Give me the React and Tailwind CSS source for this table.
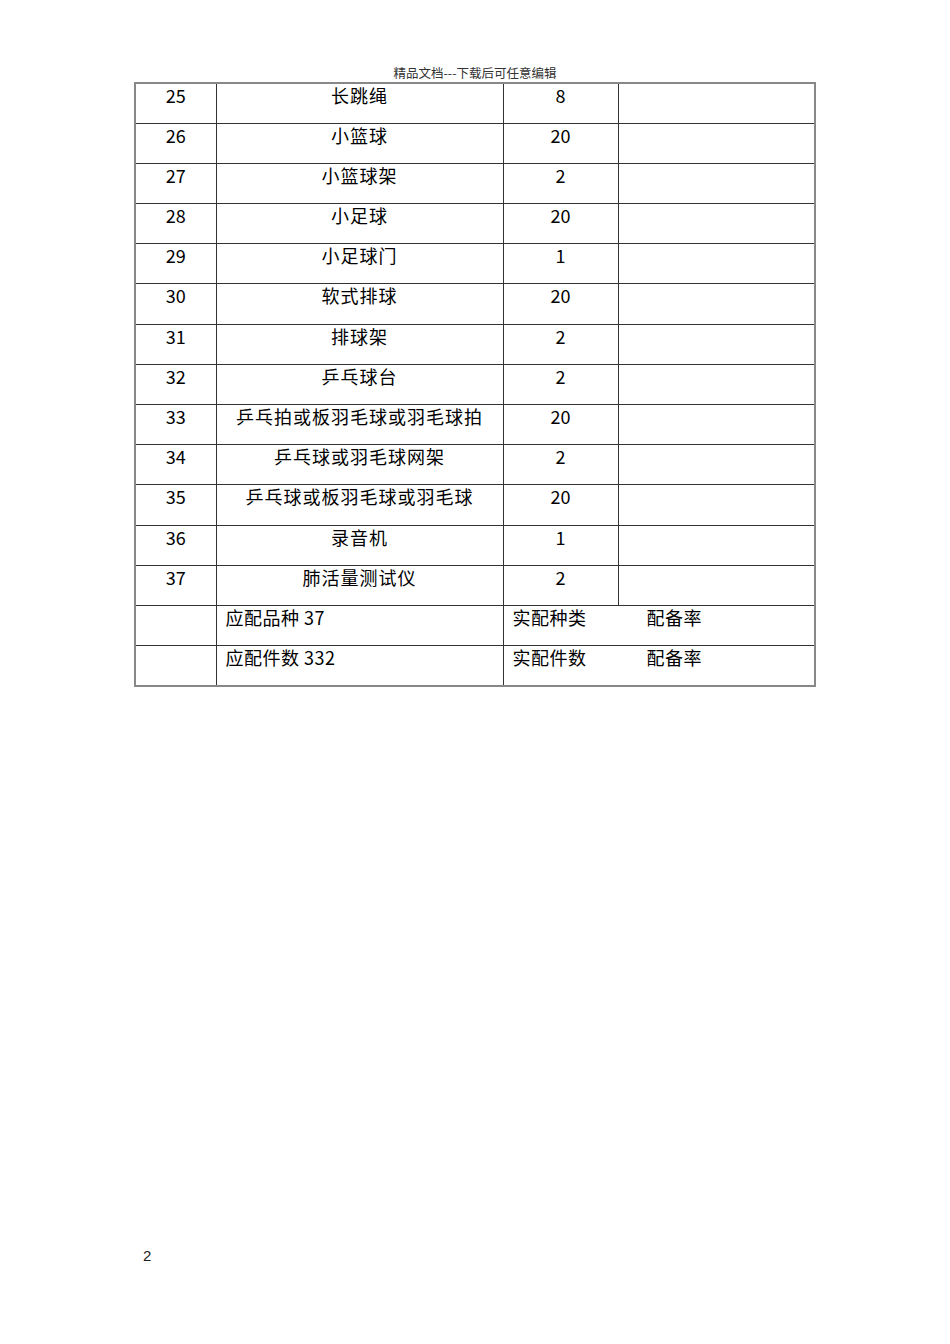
const rows = [
  ['25', '长跳绳', '8'],
  ['26', '小篮球', '20'],
  ['27', '小篮球架', '2'],
  ['28', '小足球', '20'],
  ['29', '小足球门', '1'],
  ['30', '软式排球', '20'],
  ['31', '排球架', '2'],
  ['32', '乒乓球台', '2'],
  ['33', '乒乓拍或板羽毛球或羽毛球拍', '20'],
  ['34', '乒乓球或羽毛球网架', '2'],
  ['35', '乒乓球或板羽毛球或羽毛球', '20'],
  ['36', '录音机', '1'],
  ['37', '肺活量测试仪', '2'],
];

const font = { fontFamily: '"Noto Sans CJK SC", "Noto Sans", sans-serif' };

export default function App() {
  return (
    <div className="w-[950px] h-[1344px] bg-white relative" style={font}>
      <div className="pt-[64px] text-center text-[12.5px] leading-[18px] text-[#333]">
        精品文档---下载后可任意编辑
      </div>
      <div className="ml-[134px] w-[682px]">
        <table className="table-fixed border-collapse w-[680px] text-[18px] leading-[22px] text-black border-2 border-[#888]">
          <colgroup>
            <col className="w-[81px]" />
            <col className="w-[287px]" />
            <col className="w-[115px]" />
            <col className="w-[197px]" />
          </colgroup>
          <tbody>
            {rows.map(([n, name, q]) => (
              <tr key={n} className="h-[40.2px]">
                <td className="border border-[#333] align-top text-center pt-0">{n}</td>
                <td className="border border-[#333] align-top text-center pt-0 tracking-[1px]">{name}</td>
                <td className="border border-[#333] align-top text-center pt-0">{q}</td>
                <td className="border border-[#333]"></td>
              </tr>
            ))}
            <tr className="h-[40.2px]">
              <td className="border border-[#333]"></td>
              <td className="border border-[#333] align-top pt-0 pl-[9px] tracking-[0.5px]">应配品种 37</td>
              <td colSpan={2} className="border border-[#333] align-top pt-0 pl-[9px] tracking-[0.5px]">
                <span className="inline-block w-[134px]">实配种类</span>配备率
              </td>
            </tr>
            <tr className="h-[40.2px]">
              <td className="border border-[#333]"></td>
              <td className="border border-[#333] align-top pt-0 pl-[9px] tracking-[0.5px]">应配件数 332</td>
              <td colSpan={2} className="border border-[#333] align-top pt-0 pl-[9px] tracking-[0.5px]">
                <span className="inline-block w-[134px]">实配件数</span>配备率
              </td>
            </tr>
          </tbody>
        </table>
      </div>
      <div className="mt-[560px] ml-[143px] text-[15px] leading-[18px] text-[#222]" style={{ fontFamily: '"Liberation Sans", sans-serif' }}>
        2
      </div>
    </div>
  );
}
